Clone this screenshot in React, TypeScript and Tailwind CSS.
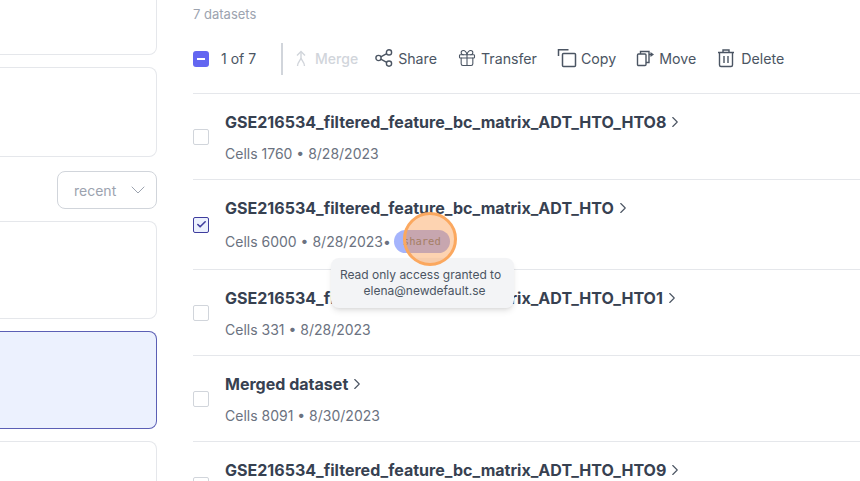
import { Check, ChevronDown, ChevronRight, Gift } from 'lucide-react'

const rows = [
  { name: 'GSE216534_filtered_feature_bc_matrix_ADT_HTO_HTO8', meta: 'Cells 1760 • 8/28/2023', h: 'h-[86px]' },
  { name: 'GSE216534_filtered_feature_bc_matrix_ADT_HTO', meta: 'Cells 6000 • 8/28/2023', h: 'h-[90px]', checked: true, shared: true },
  { name: 'GSE216534_filtered_feature_bc_matrix_ADT_HTO_HTO1', meta: 'Cells 331 • 8/28/2023', h: 'h-[86px]' },
  { name: 'Merged dataset', meta: 'Cells 8091 • 8/30/2023', h: 'h-[86px]' },
  { name: 'GSE216534_filtered_feature_bc_matrix_ADT_HTO_HTO9', meta: 'Cells 2210 • 8/28/2023', h: 'h-[86px]' },
]

function MergeIcon() {
  return (
    <svg width="16" height="18" viewBox="0 0 16 18" fill="none" stroke="#d1d5db" strokeWidth="1.4">
      <path d="M4 5.5 8 1.5l4 4" />
      <path d="M8 2v5.5M8 7.5c0 3-3.5 4-3.5 8.5M8 7.5c0 3 3.5 4 3.5 8.5" />
    </svg>
  )
}

function ShareIcon() {
  return (
    <svg width="18" height="18" viewBox="0 0 18 18" fill="none" stroke="#4b5563" strokeWidth="1.4">
      <circle cx="3.5" cy="9" r="2.6" />
      <circle cx="14" cy="3.4" r="2.6" />
      <circle cx="14" cy="14.6" r="2.6" />
      <path d="M5.8 7.8 11.7 4.6M5.8 10.2l5.9 3.2" />
    </svg>
  )
}

function CopyIcon() {
  return (
    <svg width="20" height="20" viewBox="0 0 20 20" fill="none" stroke="#4b5563" strokeWidth="1.5">
      <path d="M1.5 8V1.75H11.5" />
      <rect x="5.5" y="5.5" width="13" height="13" rx="1" />
    </svg>
  )
}

function MoveIcon() {
  return (
    <svg width="19" height="20" viewBox="0 0 19 20" fill="none" stroke="#4b5563" strokeWidth="1.4">
      <rect x="1.5" y="6" width="8.5" height="11.5" rx="1" />
      <path d="M4.5 6V3.5H13V14.5H10" />
      <path d="M13 6.5h2" />
      <path d="M14.5 4 18 6.5 14.5 9z" fill="#4b5563" stroke="none" />
    </svg>
  )
}

function TrashIcon() {
  return (
    <svg width="20" height="20" viewBox="0 0 20 20" fill="none" stroke="#4b5563" strokeWidth="1.4">
      <path d="M2 4.5h16M7 4.5V2h6v2.5" />
      <path d="M3.5 4.5V17a1.5 1.5 0 0 0 1.5 1.5h10a1.5 1.5 0 0 0 1.5-1.5V4.5" />
      <path d="M8 8v7M12 8v7" />
    </svg>
  )
}

function Action({ icon, label, gap = 'gap-[5px]' }: { icon: React.ReactNode; label: string; gap?: string }) {
  return (
    <div className={`flex items-center text-[14.2px] text-[#4b5563] ${gap}`}>
      {icon}
      <span>{label}</span>
    </div>
  )
}

export default function App() {
  return (
    <div className="flex h-[481px] w-[860px] overflow-hidden bg-white font-['Inter',sans-serif]">
      <div className="flex w-[157px] shrink-0 flex-col gap-3">
        <div className="-mt-9 h-[91px] shrink-0 rounded-r-lg border border-l-0 border-[#e5e7eb]" />
        <div className="h-[90px] shrink-0 rounded-r-lg border border-l-0 border-[#e5e7eb]" />
        <div className="flex justify-end pt-[2px]">
          <div className="flex h-[38px] w-[100px] items-center justify-between rounded-lg border border-[#d1d5db] pl-4 pr-[6px] text-[14px] text-[#9ca3af]">
            <span>recent</span>
            <ChevronDown className="h-6 w-6" strokeWidth={1} />
          </div>
        </div>
        <div className="h-[98px] shrink-0 rounded-r-lg border border-l-0 border-[#e5e7eb]" />
        <div className="h-[98px] shrink-0 rounded-r-lg border border-l-0 border-[#5b5fb5] bg-[#ecf1fe]" />
        <div className="h-[98px] shrink-0 rounded-r-lg border border-l-0 border-[#e5e7eb]" />
      </div>

      <div className="relative ml-9 min-w-0 flex-1">
        <div className="pt-[6px] text-[13px] leading-[17px] text-[#9ca3af]">7 datasets</div>

        <div className="mt-3 flex h-[47px] items-center">
          <div className="flex h-4 w-4 items-center justify-center rounded-[3px] bg-[#6366f1]">
            <div className="h-[2px] w-2 bg-white" />
          </div>
          <span className="ml-3 text-[14px] text-[#4b5563]">1 of 7</span>
          <div className="ml-[25px] h-8 w-[2px] bg-[#d1d5db]" />
          <div className="ml-[10px] flex items-center gap-[6px] text-[14px] text-[#d1d5db]">
            <MergeIcon />
            <span className="font-medium">Merge</span>
          </div>
          <div className="ml-[17px] flex items-center gap-5">
            <Action icon={<ShareIcon />} label="Share" />
            <Action icon={<Gift className="h-5 w-5" strokeWidth={1.3} />} label="Transfer" gap="gap-1" />
            <Action icon={<CopyIcon />} label="Copy" gap="gap-1" />
            <Action icon={<MoveIcon />} label="Move" gap="gap-1" />
            <Action icon={<TrashIcon />} label="Delete" />
          </div>
        </div>

        <div className="mt-[11px] border-t border-[#e5e7eb]" />

        {rows.map((row) => (
          <div key={row.name} className={`flex items-center border-b border-[#e5e7eb] ${row.h}`}>
            <div
              className={
                row.checked
                  ? 'flex h-4 w-4 items-center justify-center rounded-[2px] border border-[#3f3d9e] bg-[#ebf0fd]'
                  : 'h-4 w-4 rounded-[2px] border border-[#d1d5db]'
              }
            >
              {row.checked && <Check className="h-[11px] w-[11px] text-[#3f3d9e]" strokeWidth={3.5} />}
            </div>
            <div className="ml-4 pt-[2px]">
              <div className="flex items-center text-[16.05px] font-bold leading-5 text-[#374151]">
                <span>{row.name}</span>
                <ChevronRight className="h-[18px] w-[18px] text-[#4b5563]" strokeWidth={1.5} />
              </div>
              <div className="mt-3 flex items-center text-[14px] leading-5 text-[#6b7280]">
                <span>{row.meta}</span>
                {row.shared && (
                  <>
                    <span>•</span>
                    <span className="ml-[3px] rounded-full bg-[#a5b4fc] px-[9px] font-['DejaVu_Sans_Mono',monospace] text-[10.5px] leading-[23px] text-[#6b7280]">shared</span>
                  </>
                )}
              </div>
            </div>
          </div>
        ))}

        <div className="absolute left-[138px] top-[258px] w-[183px] rounded-lg bg-[#f3f4f6] py-[9px] text-center text-[12px] leading-4 text-[#4b5563] shadow-md">
          <span className="block pr-1">Read only access granted to</span>
          <span className="block pl-1">elena@newdefault.se</span>
        </div>
        <div className="absolute left-[210px] top-[212px] h-[54px] w-[54px] rounded-full border-[3px] border-[#fba85f] bg-[#fb923c]/40" />
      </div>
    </div>
  )
}
